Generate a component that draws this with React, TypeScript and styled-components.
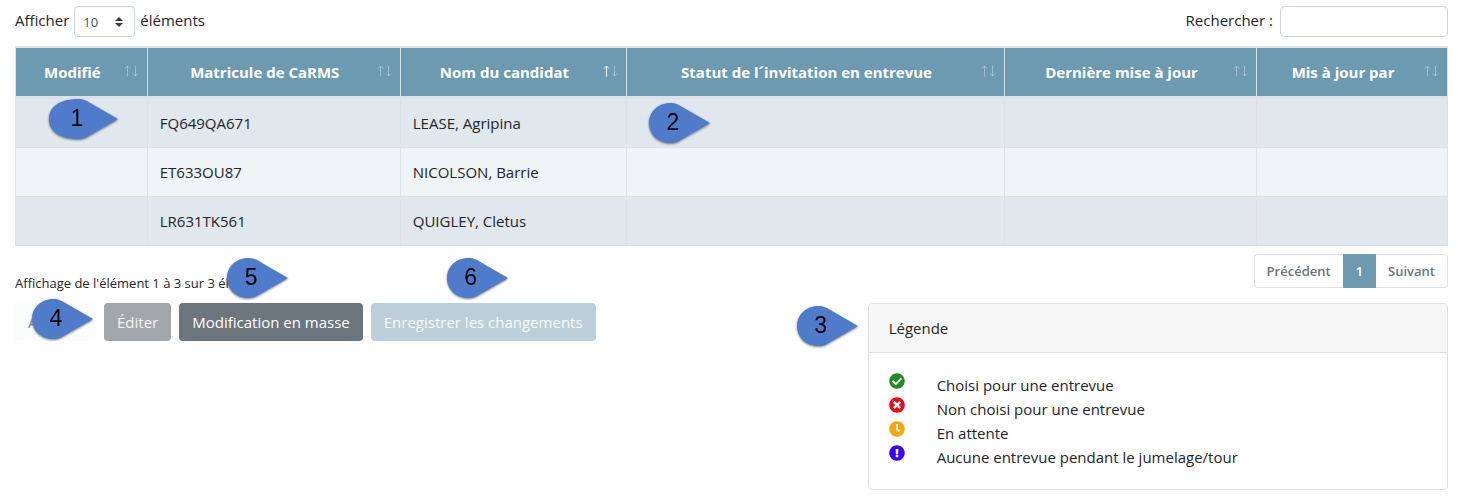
import React from 'react';
import styled, { createGlobalStyle } from 'styled-components';
import { FaCheckCircle, FaTimesCircle, FaClock, FaExclamationCircle } from 'react-icons/fa';

const GlobalStyle = createGlobalStyle`
  *, *::before, *::after { box-sizing: border-box; }
  body {
    margin: 0;
    background: #fff;
    color: #212529;
    font-family: 'Open Sans', 'Noto Sans', sans-serif;
    font-size: 15px;
    line-height: 24px;
  }
`;

const Page = styled.main`
  padding: 0 15px 12px;
`;

const Toolbar = styled.div`
  display: flex;
  justify-content: space-between;
  padding: 6px 0 9px;
`;

const Field = styled.div`
  display: flex;
  align-items: flex-start;
  gap: ${(p: { $gap: number }) => p.$gap}px;
  line-height: 29px;
`;

const SelectBox = styled.span`
  position: relative;
  display: flex;
`;

const LengthSelect = styled.select`
  appearance: none;
  width: 61px;
  height: 31px;
  padding: 0 8px;
  border: 1px solid #ced4da;
  border-radius: 4px;
  background: #fff;
  color: #495057;
  font: 13px 'Open Sans', sans-serif;
`;

const Caret = styled.svg`
  position: absolute;
  right: 12px;
  top: 11px;
  pointer-events: none;
`;

const SearchInput = styled.input`
  width: 168px;
  height: 31px;
  padding: 4px 8px;
  border: 1px solid #ced4da;
  border-radius: 4px;
  font: 13px 'Open Sans', sans-serif;
`;

const Table = styled.table`
  width: 100%;
  table-layout: fixed;
  border-spacing: 0;
  border-left: 1px solid #dee2e6;
  border-top: 2px solid #dee2e6;
`;

const Col = styled.col<{ $w: number }>`
  width: ${(p) => p.$w}%;
`;

const HeadCell = styled.th`
  position: relative;
  height: 51px;
  padding: 0 30px 0 12px;
  border-right: 1px solid #dee2e6;
  border-bottom: 3px solid #dee2e6;
  background: #6c9ab1;
  color: #fff;
  font-weight: 700;
  text-align: center;
  white-space: nowrap;
`;

const SortIcon = styled.svg`
  position: absolute;
  right: 8px;
  top: 17px;
`;

const Row = styled.tr`
  background: #eff4f7;
  &:nth-child(odd) { background: #e0e8ed; }
`;

const Cell = styled.td`
  position: relative;
  height: 49px;
  padding: 0 12px;
  border-right: 1px solid #dee2e6;
  border-bottom: 1px solid #dee2e6;
`;

const TableFooter = styled.div`
  display: flex;
  justify-content: space-between;
  align-items: flex-start;
  padding: 8px 0 10px;
`;

const Info = styled.div`
  padding-top: 19px;
  font-size: 13px;
  line-height: 20px;
`;

const Pagination = styled.nav`
  display: flex;
`;

const PageButton = styled.button<{ $active?: boolean }>`
  height: 34px;
  padding: 0 12px;
  border: 1px solid ${(p) => (p.$active ? '#6c9ab1' : '#dee2e6')};
  background: ${(p) => (p.$active ? '#6c9ab1' : '#fff')};
  color: ${(p) => (p.$active ? '#fff' : '#6c757d')};
  font: 600 13px 'Open Sans', sans-serif;
  &:first-child { border-right: 0; border-radius: 4px 0 0 4px; }
  &:last-child { border-left: 0; border-radius: 0 4px 4px 0; }
`;

const Bottom = styled.div`
  display: flex;
  justify-content: space-between;
  align-items: flex-start;
`;

const Actions = styled.div`
  display: flex;
  gap: 8px;
`;

const Anchor = styled.div`
  position: relative;
`;

const tones = {
  light: ['#fbfcfc', '#85888a'],
  muted: ['#a1a6ab', '#f4f5f6'],
  dark: ['#6c757d', '#fff'],
  primary: ['#bbcfda', '#f8fafb'],
};

const ActionButton = styled.button<{ $tone: keyof typeof tones; $minWidth?: number }>`
  min-width: ${(p) => p.$minWidth ?? 0}px;
  height: 38px;
  padding: 0 13px;
  border: 0;
  border-radius: 4px;
  background: ${(p) => tones[p.$tone][0]};
  color: ${(p) => tones[p.$tone][1]};
  font: 15px 'Open Sans', sans-serif;
  text-align: left;
  white-space: nowrap;
`;

const Card = styled.section`
  position: relative;
  width: 40.5%;
  border: 1px solid #dfdfdf;
  border-radius: 4px;
`;

const CardHeader = styled.header`
  padding: 12px 20px;
  border-bottom: 1px solid #dfdfdf;
  border-radius: 3px 3px 0 0;
  background: #f7f7f7;
`;

const LegendList = styled.ul`
  margin: 0;
  padding: 20px;
  list-style: none;
`;

const LegendItem = styled.li`
  display: flex;
  align-items: flex-start;
  gap: 32px;
`;

const MarkerBox = styled.span<{ $x: number; $y: number }>`
  position: absolute;
  z-index: 1;
  left: ${(p) => p.$x}px;
  top: ${(p) => p.$y}px;
  display: flex;
  pointer-events: none;
  filter: drop-shadow(0 1px 1px rgba(0, 0, 0, 0.5));
`;

const MarkerNumber = styled.span<{ $long?: boolean }>`
  position: absolute;
  inset: 0 auto 0 0;
  width: ${(p) => (p.$long ? 56 : 48)}px;
  color: #000;
  font: 23px/39px 'Liberation Sans', sans-serif;
  text-align: center;
`;

function Marker({ n, x, y, long }: { n: number; x: number; y: number; long?: boolean }) {
  const tip = long ? 69 : 61;
  return (
    <MarkerBox $x={x} $y={y}>
      <svg width={tip} height="40" viewBox={`0 0 ${tip} 40`} aria-hidden="true">
        <path
          d={`M${tip - 40} 0C${tip - 34} 0 ${tip - 31} 2 ${tip - 26} 5L${tip} 20L${tip - 26} 35C${tip - 31} 38 ${tip - 34} 40 ${tip - 40} 40C9 40 0 31 0 20S9 0 ${tip - 40} 0Z`}
          fill="#4f7bcb"
        />
      </svg>
      <MarkerNumber $long={long}>{n}</MarkerNumber>
    </MarkerBox>
  );
}

function Sort({ asc }: { asc?: boolean }) {
  return (
    <SortIcon width="16" height="12" viewBox="0 0 16 12" fill="none" stroke="#fff" aria-hidden="true">
      <path d="M4.5 11.5V1M2 3.5L4.5 1L7 3.5" opacity={asc ? 1 : 0.35} />
      <path d="M12.5 0.5V11M10 8.5L12.5 11L15 8.5" opacity="0.35" />
    </SortIcon>
  );
}

const columns = [
  { label: 'Modifié', w: 9.2 },
  { label: 'Matricule de CaRMS', w: 17.67 },
  { label: 'Nom du candidat', w: 15.8 },
  { label: 'Statut de l´invitation en entrevue', w: 26.4 },
  { label: 'Dernière mise à jour', w: 17.6 },
  { label: 'Mis à jour par', w: 13.33 },
];

const rows = [
  ['FQ649QA671', 'LEASE, Agripina'],
  ['ET633OU87', 'NICOLSON, Barrie'],
  ['LR631TK561', 'QUIGLEY, Cletus'],
];

const legend = [
  { Icon: FaCheckCircle, color: '#228b22', label: 'Choisi pour une entrevue' },
  { Icon: FaTimesCircle, color: '#fb0019', label: 'Non choisi pour une entrevue' },
  { Icon: FaClock, color: '#f9a510', label: 'En attente' },
  { Icon: FaExclamationCircle, color: '#3c00ff', label: 'Aucune entrevue pendant le jumelage/tour' },
];

export default function App() {
  return (
    <Page>
      <GlobalStyle />
      <Toolbar>
        <Field $gap={5}>
          <label htmlFor="length">Afficher</label>
          <SelectBox>
            <LengthSelect id="length" defaultValue="10">
              <option>10</option>
              <option>25</option>
              <option>50</option>
            </LengthSelect>
            <Caret width="8" height="10" viewBox="0 0 4 5" aria-hidden="true">
              <path fill="#343a40" d="M2 0L0 2h4zm0 5L0 3h4z" />
            </Caret>
          </SelectBox>
          <span>éléments</span>
        </Field>
        <Field $gap={7}>
          <label htmlFor="search">Rechercher :</label>
          <SearchInput id="search" type="search" />
        </Field>
      </Toolbar>

      <Table>
        <colgroup>
          {columns.map((c) => (
            <Col key={c.label} $w={c.w} />
          ))}
        </colgroup>
        <thead>
          <tr>
            {columns.map((c, i) => (
              <HeadCell key={c.label} scope="col" aria-sort={i === 2 ? 'ascending' : undefined}>
                {c.label}
                <Sort asc={i === 2} />
              </HeadCell>
            ))}
          </tr>
        </thead>
        <tbody>
          {rows.map(([id, name], i) => (
            <Row key={id}>
              <Cell>{i === 0 && <Marker n={1} x={33} y={0} long />}</Cell>
              <Cell>{id}</Cell>
              <Cell>{name}</Cell>
              <Cell>{i === 0 && <Marker n={2} x={22} y={4} />}</Cell>
              <Cell />
              <Cell />
            </Row>
          ))}
        </tbody>
      </Table>

      <TableFooter>
        <Info>Affichage de l'élément 1 à 3 sur 3 él</Info>
        <Pagination aria-label="Pagination">
          <PageButton type="button">Précédent</PageButton>
          <PageButton type="button" $active>1</PageButton>
          <PageButton type="button">Suivant</PageButton>
        </Pagination>
      </TableFooter>

      <Bottom>
        <Actions>
          <Anchor>
            <ActionButton type="button" $tone="light" $minWidth={81} disabled>A</ActionButton>
            <Marker n={4} x={17} y={-4} />
          </Anchor>
          <ActionButton type="button" $tone="muted" disabled>Éditer</ActionButton>
          <Anchor>
            <ActionButton type="button" $tone="dark">Modification en masse</ActionButton>
            <Marker n={5} x={48} y={-45} />
          </Anchor>
          <Anchor>
            <ActionButton type="button" $tone="primary" disabled>Enregistrer les changements</ActionButton>
            <Marker n={6} x={76} y={-45} />
          </Anchor>
        </Actions>
        <Card>
          <Marker n={3} x={-72} y={2} />
          <CardHeader>Légende</CardHeader>
          <LegendList>
            {legend.map(({ Icon, color, label }) => (
              <LegendItem key={label}>
                <Icon size={16} color={color} aria-hidden="true" />
                <span>{label}</span>
              </LegendItem>
            ))}
          </LegendList>
        </Card>
      </Bottom>
    </Page>
  );
}
